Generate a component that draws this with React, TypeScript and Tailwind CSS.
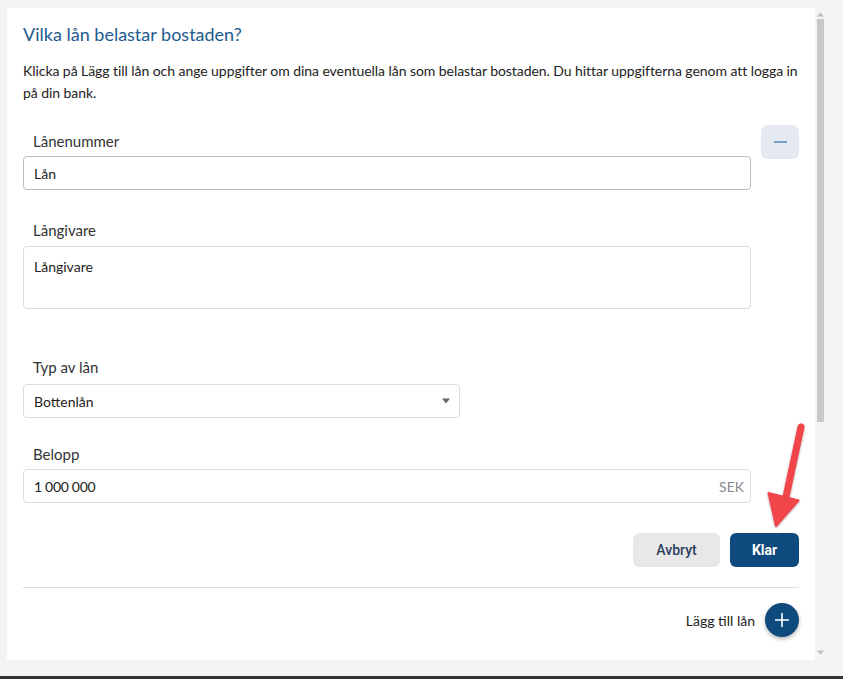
import React from "react";

export default function App() {
  const lato = { fontFamily: "Lato, 'Noto Sans', sans-serif" } as React.CSSProperties;
  return (
    <div className="relative w-[843px] h-[679px] bg-[#f3f3f3] overflow-hidden" style={lato}>
      <div className="flex h-[676px]">
        {/* card */}
        <div className="ml-[7px] mt-[8px] w-[808px] h-[652px] bg-white pl-[16px] pr-[16px] pt-[14px]">
          <h1 className="text-[18px] leading-[24px] text-[#1d5a8e] font-normal">Vilka lån belastar bostaden?</h1>
          <p className="mt-[14px] text-[14px] leading-[22px] text-[#222] whitespace-nowrap tracking-[-0.06px]">
            Klicka på Lägg till lån och ange uppgifter om dina eventuella lån som belastar bostaden. Du hittar uppgifterna genom att logga in
            <br />
            på din bank.
          </p>

          <div className="mt-[21px] flex justify-between">
            <div className="w-[728px] flex flex-col">
              <label className="pl-[10px] pt-[6px] text-[15px] leading-[20px] text-[#333]">Lånenummer</label>
              <div className="mt-[5px] h-[34px] border border-[#b9b9b9] rounded-[4px] flex items-center px-[10px] text-[14px] text-[#222]">
                Lån
              </div>

              <label className="mt-[30px] pl-[10px] text-[15px] leading-[20px] text-[#333]">Långivare</label>
              <div className="mt-[6px] h-[63px] border border-[#dcdcdc] rounded-[4px] px-[10px] pt-[10px] text-[14px] leading-[20px] text-[#222]">
                Långivare
              </div>

              <label className="mt-[48px] pl-[10px] text-[15px] leading-[20px] text-[#333]">Typ av lån</label>
              <div className="mt-[7px] w-[437px] h-[34px] border border-[#dcdcdc] rounded-[4px] flex items-center justify-between pl-[10px] pr-[9px] text-[14px] text-[#222]">
                <span>Bottenlån</span>
                <svg width="8" height="6" viewBox="0 0 8 6">
                  <path d="M0 0.5 L8 0.5 L4 5.5 Z" fill="#666" />
                </svg>
              </div>

              <label className="mt-[26px] pl-[10px] text-[15px] leading-[20px] text-[#333]">Belopp</label>
              <div className="mt-[5px] h-[34px] border border-[#dcdcdc] rounded-[4px] flex items-center justify-between pl-[10px] pr-[6px] text-[14px] text-[#222]">
                <span className="tracking-[-0.3px]">1 000 000</span>
                <span className="text-[#888]">SEK</span>
              </div>
            </div>
            <button className="w-[38px] h-[34px] rounded-[6px] bg-[#e5eaf2] flex items-center justify-center">
              <span className="block w-[13px] h-[2px] bg-[#7e9fc4]" />
            </button>
          </div>

          <div className="mt-[30px] flex justify-end gap-[10px]" style={{ fontFamily: "Roboto, 'Liberation Sans', sans-serif" }}>
            <button className="w-[87px] h-[34px] rounded-[6px] bg-[#e8e8e8] text-[14px] font-medium text-[#2d3f5e]">Avbryt</button>
            <button className="w-[69px] h-[34px] rounded-[6px] bg-[#0f4a7e] text-[14px] font-bold text-white">Klar</button>
          </div>

          <div className="mt-[20px] h-px bg-[#dddddd]" />

          <div className="mt-[15px] flex justify-end items-center gap-[10px]">
            <span className="text-[14px] text-[#222]">Lägg till lån</span>
            <button className="w-[34px] h-[34px] rounded-full bg-[#0f4a7e] flex items-center justify-center shadow-[0_2px_4px_rgba(0,0,0,0.3)]">
              <svg width="14" height="14" viewBox="0 0 14 14">
                <path d="M7 0 V14 M0 7 H14" stroke="white" strokeWidth="1.6" />
              </svg>
            </button>
          </div>
        </div>

        {/* scrollbar */}
        <div className="ml-[1px] w-[9px] flex flex-col items-center pt-[12px]">
          <svg width="7" height="5" viewBox="0 0 7 5"><path d="M0 4.5 L7 4.5 L3.5 0.5 Z" fill="#bdbdbd" /></svg>
          <div className="mt-[2px] w-[7px] h-[403px] bg-[#c8c8c8]" />
          <div className="flex-1" />
          <svg className="mb-[21px]" width="7" height="5" viewBox="0 0 7 5"><path d="M0 0.5 L7 0.5 L3.5 4.5 Z" fill="#bdbdbd" /></svg>
        </div>
      </div>
      <div className="h-[3px] bg-[#333333]" />

      {/* red annotation arrow */}
      <svg className="absolute left-0 top-0 pointer-events-none" width="843" height="679" viewBox="0 0 843 679">
        <defs>
          <filter id="sh" x="-50%" y="-50%" width="200%" height="200%">
            <feDropShadow dx="0" dy="1" stdDeviation="1.2" floodColor="#000" floodOpacity="0.35" />
          </filter>
        </defs>
        <g filter="url(#sh)">
          <line x1="801" y1="427" x2="786" y2="497" stroke="#f0444a" strokeWidth="7" strokeLinecap="round" />
          <polygon points="776,526 768.5,493 798.5,500.5" fill="#f0444a" stroke="#f0444a" strokeWidth="2" strokeLinejoin="round" />
        </g>
      </svg>
    </div>
  );
}
